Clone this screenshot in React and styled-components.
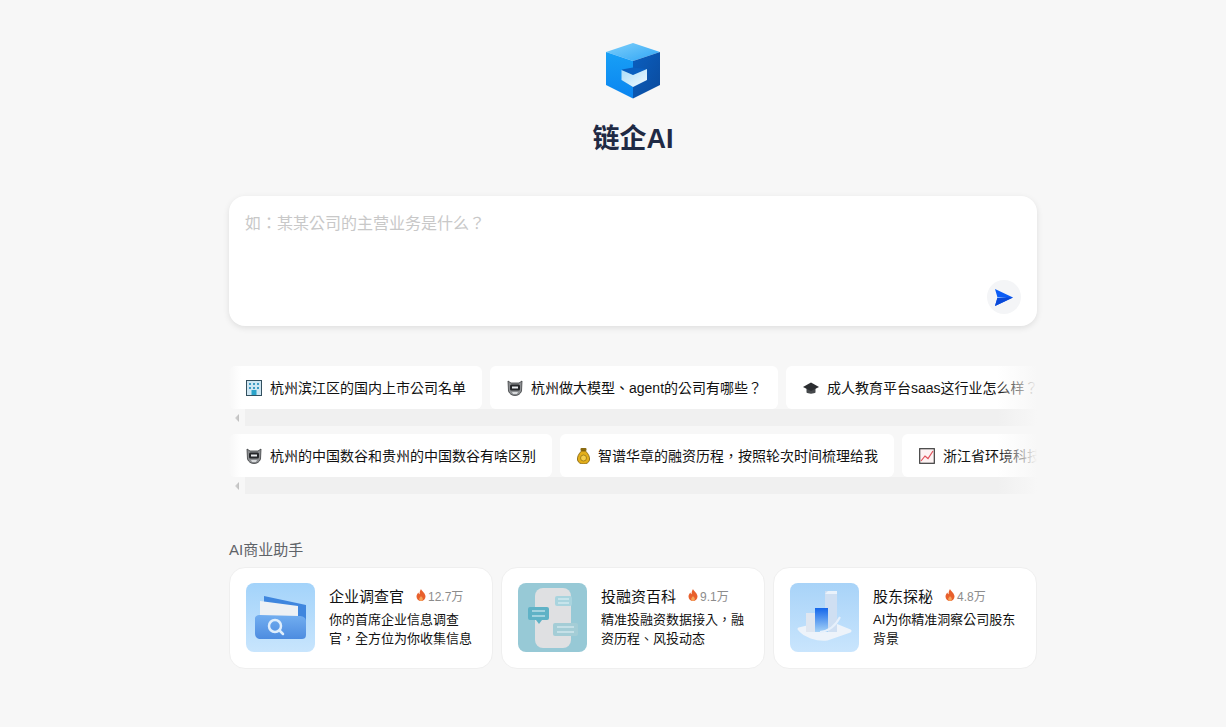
import React from 'react';
import styled, { createGlobalStyle } from 'styled-components';

const GlobalStyle = createGlobalStyle`
    html, body {
        margin: 0;
        padding: 0;
        background: #f7f7f7;
    }
    body {
        font-family: "Liberation Sans", "Noto Sans CJK SC", sans-serif;
        color: #111;
        overflow: hidden;
    }
    * {
        box-sizing: border-box;
    }
`

const LogoIcon = () => (
    <svg width="54" height="56" viewBox="0 0 54 56">
        <defs>
            <linearGradient id="logoTop" x1="0" y1="0" x2="1" y2="1">
                <stop offset="0" stopColor="#7fd0fb" />
                <stop offset="1" stopColor="#2fa5f5" />
            </linearGradient>
            <linearGradient id="logoLeft" x1="0" y1="0" x2="0" y2="1">
                <stop offset="0" stopColor="#18a0f6" />
                <stop offset="1" stopColor="#0a84f0" />
            </linearGradient>
            <linearGradient id="logoRight" x1="0" y1="0" x2="1" y2="1">
                <stop offset="0" stopColor="#0a5fc0" />
                <stop offset="1" stopColor="#0b4a9c" />
            </linearGradient>
            <linearGradient id="logoCup" x1="0" y1="0" x2="1" y2="1">
                <stop offset="0" stopColor="#a8dcf8" />
                <stop offset="1" stopColor="#f2f9fe" />
            </linearGradient>
        </defs>
        <path d="M27 0 54 9 27 18 0 9z" fill="url(#logoTop)" />
        <path d="M0 9 27 18V55.500L0 42z" fill="url(#logoLeft)" />
        <path d="M54 9 27 18V55.500L54 42z" fill="url(#logoRight)" />
        <path d="M16 26.500 27 24.500 40.500 26V37L27 44 16 37z" fill="#0a5fc0" />
        <path d="M15.500 27 27 32 41 26V37L27 44 15.500 37z" fill="url(#logoCup)" />
    </svg>
)

const SendIcon = () => (
    <svg width="18" height="17" viewBox="0 0 18 17">
        <path d="M0 0 18 8.500 0 17 2.500 8.500z" fill="#0b5cf5" />
        <path d="M2.500 8.500H18L0 17z" fill="#0a49d8" />
        <path d="M2 8 12 8.500 2 9z" fill="#9cc4ff" />
    </svg>
)

const BuildingIcon = () => (
    <svg width="16" height="16" viewBox="0 0 16 16">
        <rect x=".5" y=".5" width="15" height="15" fill="#cfe6f2" stroke="#33505f" />
        <rect x="5.500" y="10" width="5" height="5" fill="#2aa3c9" />
        <g fill="#3f9cc4">
            <rect x="3" y="3" width="2" height="2" />
            <rect x="7" y="3" width="2" height="2" />
            <rect x="11" y="3" width="2" height="2" />
            <rect x="3" y="7" width="2" height="2" />
            <rect x="7" y="7" width="2" height="2" />
            <rect x="11" y="7" width="2" height="2" />
        </g>
    </svg>
)

const RobotIcon = () => (
    <svg width="16" height="16" viewBox="0 0 16 16">
        <path d="M1 1 4 3H12L15 1 14.500 11C13.500 14 11 15.500 8 15.500S2.500 14 1.500 11z" fill="#8d8f92" stroke="#3b3d40" strokeWidth=".8" />
        <rect x="3" y="4.500" width="10" height="6" rx="1.500" fill="#26282b" />
        <rect x="5" y="6.500" width="6" height="2" fill="#e9ecef" />
        <path d="M5 12H11L10 14H6z" fill="#d8dadc" />
    </svg>
)

const CapIcon = () => (
    <svg width="16" height="16" viewBox="0 0 16 16">
        <path d="M3.500 8V12.500C5 14 11 14 12.500 12.500V8z" fill="#45484b" />
        <path d="M8 2.500 16 7 8 11 0 7z" fill="#2b2d30" />
    </svg>
)

const BagIcon = () => (
    <svg width="13" height="16" viewBox="1.500 0 13 16">
        <rect x="5" y="0" width="6" height="3" rx="1" fill="#8a6a10" />
        <path d="M6 3H10C13 6 14.500 9 14 12 13.500 14.500 11 16 8 16S2.500 14.500 2 12C1.500 9 3 6 6 3z" fill="#e3ae1a" stroke="#7a5c0c" strokeWidth=".8" />
        <circle cx="8" cy="10" r="3" fill="#f4cd4a" stroke="#8a6a10" strokeWidth=".7" />
    </svg>
)

const ChartIcon = () => (
    <svg width="16" height="16" viewBox="0 0 16 16">
        <rect x=".7" y=".7" width="14.600" height="14.600" fill="#fdf3f3" stroke="#3c3c3c" strokeWidth="1.200" />
        <path d="M2 13 6 8 9 10.500 14 3" fill="none" stroke="#e0505a" strokeWidth="1.200" />
    </svg>
)

const FlameIcon = () => (
    <svg width="10" height="12" viewBox="0 0 10 12">
        <path d="M5 0C5.500 2 9.500 4 9.500 7.500 9.500 10.200 7.500 12 5 12S.5 10.200.5 7.500C.5 5.800 1.500 4.500 2.500 3.500 2.700 4.500 3 5 3.600 5.300 3.500 3.500 4 1.500 5 0z" fill="#e8602c" />
        <path d="M5 7C5.500 8 6.800 8.600 6.800 10 6.800 11 6 12 5 12S3.200 11 3.200 10C3.200 8.800 4.500 8.200 5 7z" fill="#f6a55a" />
    </svg>
)

const SearchArt = () => (
    <svg width="69" height="69" viewBox="0 0 69 69">
        <defs>
            <linearGradient id="artBlue" x1="0" y1="0" x2="0" y2="1">
                <stop offset="0" stopColor="#a3d3fa" />
                <stop offset="1" stopColor="#c8e5fd" />
            </linearGradient>
            <linearGradient id="folder" x1="0" y1="0" x2="0" y2="1">
                <stop offset="0" stopColor="#72aef0" />
                <stop offset="1" stopColor="#4d8ce0" />
            </linearGradient>
        </defs>
        <rect width="69" height="69" rx="8" fill="url(#artBlue)" />
        <path d="M18 13 60 22V50L18 40z" fill="#3f86de" />
        <path d="M14 18 52 23V36L14 34z" fill="#eef1f4" />
        <path d="M9 36C9 33 11 32 14 32L53 33C56 33 60 34 60 38V52C60 55 58 56 56 56H15C11 56 9 54 9 50z" fill="url(#folder)" />
        <circle cx="29" cy="43" r="6" fill="none" stroke="#dfeefc" strokeWidth="2.500" />
        <path d="M33.500 47.500 37 51" stroke="#dfeefc" strokeWidth="2.500" strokeLinecap="round" />
    </svg>
)

const ChatArt = () => (
    <svg width="69" height="69" viewBox="0 0 69 69">
        <rect width="69" height="69" rx="8" fill="#97c9d6" />
        <rect x="17" y="5" width="36" height="60" rx="8" fill="#dfe0e2" />
        <rect x="37" y="13" width="17" height="10" rx="2" fill="#a9d4de" />
        <rect x="10" y="24" width="21" height="13" rx="2" fill="#5fb2c6" />
        <path d="M18 37H24L21 41z" fill="#5fb2c6" />
        <rect x="35" y="40" width="25" height="13" rx="2" fill="#a4cdd6" />
        <g stroke="#e6f4f7" strokeWidth="1.200">
            <path d="M40 16H51M40 20H51" />
            <path d="M14 28H27M14 33H27" />
            <path d="M39 44H56M39 49H56" />
        </g>
    </svg>
)

const ChartArt = () => (
    <svg width="69" height="69" viewBox="0 0 69 69">
        <defs>
            <linearGradient id="artSky" x1="0" y1="0" x2="0" y2="1">
                <stop offset="0" stopColor="#a8d3f8" />
                <stop offset="1" stopColor="#c9e5fd" />
            </linearGradient>
            <linearGradient id="barBlue" x1="0" y1="0" x2="0" y2="1">
                <stop offset="0" stopColor="#1466ea" />
                <stop offset="1" stopColor="#a5d2f7" />
            </linearGradient>
        </defs>
        <rect width="69" height="69" rx="8" fill="url(#artSky)" />
        <path d="M9 46 38 39 60 48 37 56C27 57 14 53 9 46z" fill="#edf3fa" stroke="#edf3fa" strokeWidth="3" strokeLinejoin="round" />
        <rect x="16" y="30" width="10" height="19" fill="#dfe6f0" />
        <rect x="35" y="8" width="12" height="41" fill="#cfdff2" />
        <rect x="25" y="25" width="13" height="24" fill="url(#barBlue)" />
        <path d="M35 11 38 8H47V11z" fill="#eaf2fb" />
        <path d="M30 49C40 48 46 42 50 34" fill="none" stroke="#e6f0fb" strokeWidth="2" />
    </svg>
)

const chipRows = [
    [
        { icon: <BuildingIcon />, text: '杭州滨江区的国内上市公司名单' },
        { icon: <RobotIcon />, text: '杭州做大模型、agent的公司有哪些？' },
        { icon: <CapIcon />, text: '成人教育平台saas这行业怎么样？' },
    ],
    [
        { icon: <RobotIcon />, text: '杭州的中国数谷和贵州的中国数谷有啥区别' },
        { icon: <BagIcon />, text: '智谱华章的融资历程，按照轮次时间梳理给我' },
        { icon: <ChartIcon />, text: '浙江省环境科技' },
    ],
]

const assistants = [
    { art: <SearchArt />, name: '企业调查官', heat: '12.7万', desc: '你的首席企业信息调查官，全方位为你收集信息' },
    { art: <ChatArt />, name: '投融资百科', heat: '9.1万', desc: '精准投融资数据接入，融资历程、风投动态' },
    { art: <ChartArt />, name: '股东探秘', heat: '4.8万', desc: 'AI为你精准洞察公司股东背景' },
]

const App = () => {
    return (
        <Page>
            <GlobalStyle />
            <Header>
                <LogoIcon />
                <Title>链企AI</Title>
            </Header>

            <InputCard>
                <Question placeholder="如：某某公司的主营业务是什么？" />
                <SendBtn aria-label="发送"><SendIcon /></SendBtn>
            </InputCard>

            <Suggestions>
                {chipRows.map((row, i) => (
                    <RowFade key={i}>
                        <ChipRow>
                            {row.map((chip) => (
                                <Chip key={chip.text}>
                                    {chip.icon}
                                    <span>{chip.text}</span>
                                </Chip>
                            ))}
                        </ChipRow>
                        <ScrollTrack>
                            <ScrollArrow />
                            <ScrollThumb />
                        </ScrollTrack>
                    </RowFade>
                ))}
            </Suggestions>

            <SectionLabel>AI商业助手</SectionLabel>
            <CardGrid>
                {assistants.map((item) => (
                    <Card key={item.name}>
                        <Art>{item.art}</Art>
                        <CardBody>
                            <CardHead>
                                <CardName>{item.name}</CardName>
                                <Heat><FlameIcon />{item.heat}</Heat>
                            </CardHead>
                            <CardDesc>{item.desc}</CardDesc>
                        </CardBody>
                    </Card>
                ))}
            </CardGrid>
        </Page>
    );
}

// TC sets the full-width punctuation in the middle of its cell, as the reference does
const fontStack = `"Liberation Sans", "Noto Sans CJK TC", sans-serif`

const Page = styled.div`
    width: 808px;
    height: 727px;
    margin-left: 229px;
    padding-top: 43px;
`
const Header = styled.div`
    display: flex;
    flex-direction: column;
    align-items: center;
    svg {
        display: block;
    }
`
const Title = styled.h1`
    margin: 21px 0 0;
    font-size: 27px;
    line-height: 38px;
    font-weight: 700;
    color: #1f2a44;
`
const InputCard = styled.div`
    position: relative;
    height: 130px;
    margin-top: 38px;
    background: #fff;
    border-radius: 16px;
    box-shadow: 0 2px 6px rgba(0, 0, 0, .1);
`
const Question = styled.textarea`
    display: block;
    width: 100%;
    height: 80px;
    padding: 16px;
    border: 0;
    outline: 0;
    resize: none;
    background: transparent;
    font: 16px/24px ${fontStack};
    &::placeholder {
        color: #c8c8c8;
    }
`
const SendBtn = styled.button`
    position: absolute;
    right: 16px;
    bottom: 12px;
    width: 34px;
    height: 34px;
    padding: 0;
    display: flex;
    align-items: center;
    justify-content: center;
    border: 0;
    border-radius: 50%;
    background: #f4f5f7;
`
const Suggestions = styled.div`
    display: flex;
    flex-direction: column;
    gap: 8px;
    margin-top: 40px;
`
const RowFade = styled.div`
    position: relative;
    &::before,
    &::after {
        content: '';
        position: absolute;
        top: 0;
        bottom: 0;
        z-index: 1;
        pointer-events: none;
    }
    &::before {
        left: 0;
        width: 12px;
        background: linear-gradient(to right, #f7f7f7, rgba(247, 247, 247, 0));
    }
    &::after {
        right: 0;
        width: 40px;
        background: linear-gradient(to left, #f7f7f7, rgba(247, 247, 247, 0));
    }
`
const ChipRow = styled.div`
    display: flex;
    gap: 8px;
    overflow: hidden;
`
const ScrollTrack = styled.div`
    display: flex;
    align-items: center;
    height: 17px;
`
const ScrollArrow = styled.span`
    flex: none;
    width: 0;
    height: 0;
    margin: 0 6px;
    border-style: solid;
    border-width: 4px 4px 4px 0;
    border-color: transparent #b4b4b4 transparent transparent;
`
const ScrollThumb = styled.span`
    flex: 1;
    align-self: stretch;
    background: #f0f0f0;
`
const Chip = styled.div`
    flex: none;
    height: 43px;
    padding: 0 16px 0 17px;
    display: flex;
    align-items: center;
    gap: 8px;
    background: #fff;
    border-radius: 6px;
    font-family: ${fontStack};
    font-size: 14px;
    color: #111;
    white-space: nowrap;
    svg {
        flex: none;
    }
    span {
        padding-bottom: 2px;
    }
`
const SectionLabel = styled.div`
    margin-top: 46px;
    font-size: 15px;
    line-height: 20px;
    color: #5f6368;
`
const CardGrid = styled.div`
    display: grid;
    grid-template-columns: repeat(3, 264px);
    gap: 8px;
    margin-top: 7px;
`
const Card = styled.div`
    height: 102px;
    padding: 15px 16px;
    display: flex;
    gap: 14px;
    background: #fff;
    border: 1px solid #efefef;
    border-radius: 16px;
`
const Art = styled.div`
    flex: none;
    width: 69px;
    height: 69px;
    svg {
        display: block;
    }
`
const CardBody = styled.div`
    min-width: 0;
    flex: 1;
`
const CardHead = styled.div`
    display: flex;
    align-items: center;
    gap: 12px;
    height: 24px;
`
const CardName = styled.span`
    font-size: 15px;
    color: #111;
`
const Heat = styled.span`
    display: flex;
    align-items: center;
    gap: 2px;
    font-size: 12px;
    color: #8c8c8c;
`
const CardDesc = styled.p`
    margin: 3px 0 0;
    font-family: ${fontStack};
    font-size: 13px;
    line-height: 19px;
    color: #111;
`

export default App;
